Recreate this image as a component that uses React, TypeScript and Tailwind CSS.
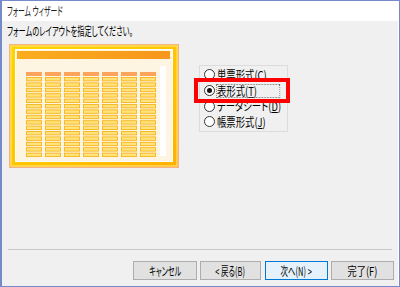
import React from "react";

const jp = "[font-family:'Noto_Sans_CJK_JP','Noto_Sans',sans-serif] [font-feature-settings:'palt']";

function LayoutPicture() {
  const cols = [0, 1, 2, 3, 4, 5, 6];
  const rows = Array.from({ length: 15 }, (_, i) => i);
  return (
    <svg width="170" height="124" viewBox="0 0 170 124">
      <defs>
        <linearGradient id="frame" x1="0" y1="0" x2="1" y2="1">
          <stop offset="0" stopColor="#ffd400" />
          <stop offset="0.6" stopColor="#ffc400" />
          <stop offset="1" stopColor="#ffb000" />
        </linearGradient>
        <linearGradient id="head" x1="0" y1="0" x2="1" y2="0">
          <stop offset="0" stopColor="#fbad1e" />
          <stop offset="1" stopColor="#f7961c" />
        </linearGradient>
      </defs>
      <rect x="0.5" y="0.5" width="169" height="123" fill="url(#frame)" stroke="#f6b08a" />
      <rect x="2" y="2" width="166" height="120" fill="none" stroke="#ffe88a" strokeWidth="1" />
      <rect x="6.5" y="5.5" width="157" height="112" fill="#fdf4e2" stroke="#ffffff" />
      <rect x="8" y="7" width="153" height="8" fill="url(#head)" />
      <rect x="151" y="22" width="6" height="90" fill="#ffffff" />
      {cols.map((c) => (
        <g key={c}>
          <rect x={17 + c * 19} y={28} width={16} height={4} fill="#fca45c" />
          {rows.map((r) => (
            <rect
              key={r}
              x={17.5 + c * 19}
              y={33.5 + r * 5.4}
              width={15}
              height={3.4}
              fill="#ffe27a"
              stroke="#f7b51c"
              strokeWidth="0.9"
            />
          ))}
        </g>
      ))}
    </svg>
  );
}

function Radio({ checked }: { checked?: boolean }) {
  return (
    <span className="flex h-[11px] w-[11px] shrink-0 items-center justify-center rounded-full border border-[#333] bg-white">
      {checked && <span className="h-[5px] w-[5px] rounded-full bg-[#111]" />}
    </span>
  );
}

function Button({ label, width, focused }: { label: React.ReactNode; width: string; focused?: boolean }) {
  return (
    <div
      className={`flex h-[19px] items-center justify-center whitespace-nowrap border text-[12px] leading-none text-black ${width} ${
        focused ? "border-[#0078d7] bg-[#e5f1fb]" : "border-[#adadad] bg-[#e1e1e1]"
      }`}
    >
      {label}
    </div>
  );
}

export default function App() {
  return (
    <div className={`relative flex h-[287px] w-[400px] flex-col overflow-hidden border border-l-2 border-[#7689c8] bg-white ${jp}`}>
      <div className="flex h-[20px] shrink-0 items-center pl-[5px] text-[12px] text-[#222]">
        <span className="inline-block origin-left scale-x-[0.57] whitespace-nowrap">フォーム ウィザード</span>
      </div>
      <div className="mr-[1px] flex flex-1 flex-col bg-[#f0f0f0]">
        <div className="pl-[5px] pt-[4px] text-[12px] leading-[12px] text-black">
          <span className="inline-block origin-left scale-x-[0.6] whitespace-nowrap">フォームのレイアウトを指定してください。</span>
        </div>
        <div className="mt-[7px] flex pl-[7px]">
          <LayoutPicture />
          <div className="ml-[20px] mt-[21px] flex h-[67px] w-[89px] flex-col border border-[#dcdcdc] pl-[4px] pt-[1px] text-[12px] leading-[15.7px] text-black">
            <div className="flex items-center gap-[2px]">
              <Radio />
              <span className="inline-block origin-left scale-x-[0.78] whitespace-nowrap">単票形式(<u>C</u>)</span>
            </div>
            <div className="flex items-center gap-[2px]">
              <Radio checked />
              <span className="relative inline-block origin-left scale-x-[0.78] whitespace-nowrap">
                表形式(<u>T</u>)
                <span className="absolute -left-[1px] top-[1px] h-[14px] w-[82px] border border-dotted border-[#777]" />
              </span>
            </div>
            <div className="flex items-center gap-[2px]">
              <Radio />
              <span className="inline-block origin-left scale-x-[0.78] whitespace-nowrap">データシート(<u>D</u>)</span>
            </div>
            <div className="flex items-center gap-[2px]">
              <Radio />
              <span className="inline-block origin-left scale-x-[0.78] whitespace-nowrap">帳票形式(<u>J</u>)</span>
            </div>
          </div>
        </div>
        <div className="flex-1" />
        <div className="mx-[6px] h-px bg-[#c9c9c9]" />
        <div className="mt-[11px] mb-[6px] flex pl-[131px]">
          <Button label={<span className="inline-block scale-x-[0.59]">キャンセル</span>} width="w-[64px]" />
          <div className="w-[3px]" />
          <Button label={<span className="inline-block scale-x-[0.62]">&lt;&nbsp;戻る(B)</span>} width="w-[61px]" />
          <div className="w-[4px]" />
          <Button label={<span className="inline-block scale-x-[0.62]">次へ(N)&nbsp;&gt;</span>} width="w-[63px]" focused />
          <div className="w-[3px]" />
          <Button label={<span className="inline-block scale-x-[0.77]">完了(F)</span>} width="w-[63px]" />
        </div>
      </div>
      <div className="absolute left-[192px] top-[77px] h-[25px] w-[96px] border-4 border-[#ff0000]" />
    </div>
  );
}
